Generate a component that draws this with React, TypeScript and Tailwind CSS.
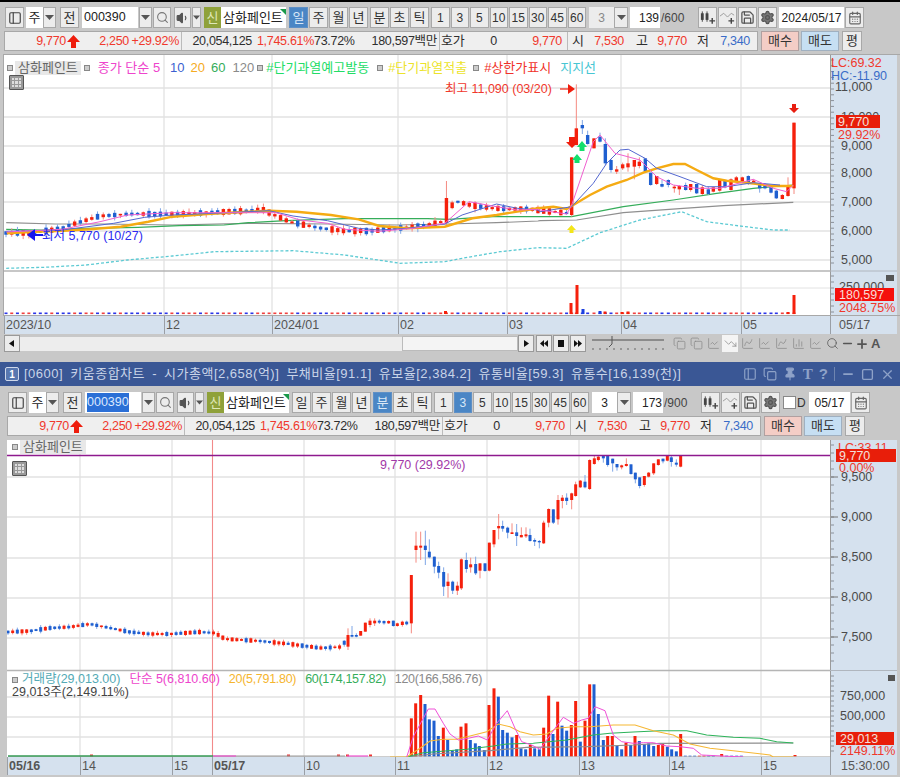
import * as React from "react";
import {
  CalendarDays,
  ChartColumn,
  ChartLine,
  ChartSpline,
  Copy,
  Minus,
  PanelLeft,
  Pin,
  Plus,
  Save,
  Search,
  Settings,
  Square,
  TrendingDown,
  Volume1,
  X,
} from "lucide-react";

const RED = "#f5200c";
const BLUE = "#1f5fd0";
const WICK_RED = "#f58a80";
const WICK_BLUE = "#7fa6e6";

type P = number[];

// reference coords were read off 3x crops, these map them back to page coords
const fromA = (l: P[]) => l.map(([x, y]) => [x / 2.9, 160 + y / 3]);
const fromB = (l: P[]) => l.map(([x, y]) => [540 + x / 3, 70 + y / 3]);
const fromV = (l: P[]) => l.map(([x, y]) => [400 + x / 3, 660 + y / 3]);
const str = (l: P[]) => l.map((p) => `${p[0].toFixed(1)},${p[1].toFixed(1)}`).join(" ");

const rnd = (i: number) => {
  const s = Math.sin(i * 12.9898 + 4.1) * 43758.5453;
  return s - Math.floor(s);
};

const interp = (keys: P[], x: number) => {
  for (let i = 1; i < keys.length; i++) {
    if (x <= keys[i][0]) {
      const t = (x - keys[i - 1][0]) / (keys[i][0] - keys[i - 1][0]);
      return keys[i - 1][1] + (keys[i][1] - keys[i - 1][1]) * t;
    }
  }
  return keys[keys.length - 1][1];
};

type Candle = { x: number; top: number; bot: number; hi: number; lo: number; red: boolean };

function genCandles(keys: P[], from: number, to: number, step: number, size: number): Candle[] {
  const out: Candle[] = [];
  let i = 0;
  for (let x = from; x < to; x += step, i++) {
    const c = interp(keys, x);
    const h = 1.5 + rnd(i) * size;
    out.push({
      x,
      top: c - h / 2,
      bot: c + h / 2,
      hi: c - h / 2 - rnd(i + 50) * size * 0.7,
      lo: c + h / 2 + rnd(i + 90) * size * 0.7,
      red: rnd(i + 200) > 0.42,
    });
  }
  return out;
}

const TOP_KEYS: P[] = [
  [5, 233], [30, 233], [60, 229], [70, 225], [100, 216], [130, 214], [165, 214], [200, 213],
  [245, 211], [262, 209], [272, 214], [290, 222], [320, 228], [345, 231], [370, 231], [400, 228],
  [420, 226], [432, 224], [441, 222], [455, 201], [470, 205], [490, 208], [510, 209], [530, 209],
  [545, 211], [566, 213],
];

// z, bodyTop, bodyBot, wickTop, wickBot, red
const TOP_RAW: [number, number, number, number, number, number][] = [
  [95, 262, 435, 262, 440, 1], [109, 175, 225, 43, 225, 1], [127, 165, 175, 150, 192, 0],
  [143, 195, 222, 182, 224, 0], [162, 205, 235, 205, 235, 1], [180, 200, 215, 188, 217, 0],
  [196, 222, 280, 205, 285, 0], [213, 270, 300, 268, 308, 0], [230, 298, 305, 288, 312, 1],
  [248, 283, 295, 278, 300, 1], [264, 280, 292, 250, 305, 1], [283, 270, 290, 270, 328, 1],
  [298, 275, 288, 262, 295, 1], [316, 265, 305, 265, 308, 0], [332, 308, 345, 308, 347, 0],
  [350, 318, 342, 318, 345, 1], [366, 342, 350, 330, 352, 0], [385, 330, 345, 328, 352, 0],
  [403, 350, 355, 345, 368, 1], [418, 348, 358, 345, 375, 1], [437, 345, 360, 338, 362, 0],
  [452, 342, 360, 342, 365, 1], [470, 342, 370, 342, 372, 0], [487, 352, 372, 345, 375, 1],
  [505, 358, 372, 350, 375, 0], [520, 352, 365, 352, 367, 1], [539, 328, 362, 328, 365, 1],
  [555, 332, 352, 332, 355, 0], [573, 328, 360, 325, 362, 1], [589, 322, 335, 318, 340, 1],
  [607, 322, 335, 320, 340, 1], [625, 318, 342, 316, 345, 0], [641, 332, 338, 328, 342, 1],
  [659, 342, 355, 340, 368, 0], [675, 342, 355, 340, 358, 0], [693, 352, 368, 350, 370, 0],
  [709, 362, 385, 360, 387, 0], [727, 375, 387, 372, 388, 1], [744, 350, 378, 322, 380, 1],
  [762, 158, 355, 158, 372, 1],
];

const TOP_CANDLES: Candle[] = [
  ...genCandles(TOP_KEYS, 6, 567, 5.72, 5).map((c) =>
    Math.abs(c.x - 446) < 3 ? { ...c, top: 198, bot: 223, hi: 181, lo: 225, red: true } : c
  ),
  ...TOP_RAW.map(([z, t, b, h, l, r]) => ({
    x: 540 + z / 3,
    top: 70 + t / 3,
    bot: 70 + b / 3,
    hi: 70 + h / 3,
    lo: 70 + l / 3,
    red: r === 1,
  })),
];

const LOW_KEYS: P[] = [
  [8, 632], [30, 631], [50, 628], [70, 627], [90, 624], [110, 628], [130, 632], [150, 634],
  [170, 634], [200, 632], [215, 633], [225, 639], [260, 641], [290, 644], [320, 648], [340, 647],
  [347, 640],
];

const LOW_RAW: [number, number, number, number, number, number][] = [
  [24, 555, 590, 535, 600, 1], [36, 555, 560, 528, 562, 0], [49, 555, 560, 550, 562, 0], [62, 543, 557, 543, 557, 1],
  [76, 518, 545, 518, 545, 1], [90, 512, 525, 505, 532, 1], [104, 512, 520, 505, 528, 1], [118, 512, 518, 508, 522, 0],
  [132, 513, 520, 511, 524, 0], [146, 513, 520, 511, 522, 1], [160, 512, 528, 512, 530, 0], [172, 520, 528, 518, 530, 1],
  [187, 515, 525, 512, 530, 1], [200, 515, 523, 512, 526, 0], [214, 375, 520, 375, 550, 1], [228, 287, 300, 245, 338, 1],
  [242, 287, 293, 245, 330, 1], [256, 287, 300, 242, 345, 0], [268, 305, 322, 268, 325, 0], [283, 320, 350, 320, 370, 0],
  [296, 348, 368, 335, 385, 0], [311, 366, 410, 352, 438, 0], [324, 395, 408, 370, 443, 1], [338, 395, 422, 392, 432, 0],
  [352, 407, 422, 395, 435, 1], [364, 328, 415, 325, 420, 1], [379, 330, 357, 308, 368, 0], [392, 343, 352, 323, 368, 1],
  [407, 342, 370, 320, 375, 0], [420, 340, 362, 340, 385, 1], [435, 340, 363, 340, 365, 0], [448, 278, 362, 278, 364, 1],
  [462, 240, 283, 240, 292, 1], [476, 228, 235, 192, 268, 1], [488, 228, 236, 212, 245, 0], [503, 233, 248, 230, 265, 0],
  [516, 247, 252, 220, 252, 1], [530, 247, 258, 222, 288, 0], [544, 255, 262, 232, 262, 1], [558, 253, 259, 232, 264, 1],
  [570, 255, 273, 236, 275, 0], [584, 270, 275, 265, 288, 0], [598, 273, 277, 270, 295, 0], [611, 218, 280, 212, 282, 1],
  [626, 177, 218, 175, 232, 1], [640, 178, 218, 178, 222, 0], [654, 150, 208, 135, 224, 1], [667, 143, 153, 135, 175, 1],
  [680, 143, 153, 130, 165, 0], [695, 130, 150, 128, 178, 1], [707, 103, 138, 95, 140, 1], [721, 92, 112, 90, 114, 1],
  [735, 95, 112, 75, 115, 0], [749, 30, 117, 28, 120, 1], [763, 25, 42, 18, 44, 1], [775, 20, 30, 16, 34, 1],
  [790, 18, 25, 15, 38, 0], [803, 18, 45, 15, 50, 0], [818, 26, 40, 26, 65, 0], [831, 42, 52, 42, 62, 0],
  [845, 46, 52, 44, 58, 1], [859, 42, 48, 25, 50, 1], [873, 43, 72, 43, 74, 0], [886, 68, 88, 68, 100, 0],
  [899, 82, 108, 82, 115, 0], [913, 78, 105, 78, 110, 1], [926, 68, 80, 66, 82, 1], [941, 40, 70, 40, 75, 1],
  [955, 28, 45, 28, 47, 1], [969, 26, 34, 26, 40, 0], [982, 18, 32, 16, 34, 1], [994, 22, 36, 15, 50, 0],
  [1009, 38, 44, 28, 50, 0], [1022, 16, 50, 16, 52, 1],
];

const LOW_CANDLES: Candle[] = [
  ...genCandles(LOW_KEYS, 8, 345, 4.67, 3),
  ...LOW_RAW.map(([z, t, b, h, l, r]) => ({
    x: 340 + z / 3,
    top: 450 + t / 3,
    bot: 450 + b / 3,
    hi: 450 + h / 3,
    lo: 450 + l / 3,
    red: r === 1,
  })),
];

// volume bars of the lower chart: z, top, red
const VOL_BARS: [number, number, number][] = [
  [34, 175, 1], [47, 130, 1], [62, 105, 1], [75, 132, 0], [88, 178, 0], [102, 182, 0], [115, 228, 0], [130, 203, 1],
  [143, 240, 0], [157, 272, 0], [170, 268, 0], [183, 200, 1], [198, 190, 1], [211, 240, 0], [226, 250, 0], [238, 258, 0],
  [253, 270, 0], [267, 135, 1], [282, 85, 1], [295, 110, 0], [308, 210, 0], [322, 218, 0], [336, 232, 0], [350, 225, 1],
  [363, 265, 0], [377, 268, 0], [391, 255, 1], [404, 265, 0], [418, 268, 0], [431, 203, 1], [446, 107, 1], [459, 222, 0],
  [473, 125, 1], [486, 197, 0], [500, 212, 0], [514, 195, 1], [527, 123, 1], [541, 245, 0], [555, 182, 1], [569, 73, 1],
  [582, 73, 0], [595, 162, 0], [610, 240, 0], [623, 228, 1], [637, 228, 1], [651, 258, 0], [665, 268, 0], [678, 248, 1],
  [692, 255, 0], [705, 228, 1], [718, 243, 0], [733, 252, 0], [746, 250, 0], [761, 258, 0], [775, 255, 1], [788, 252, 1],
  [802, 260, 0], [815, 268, 0], [829, 274, 0], [842, 222, 1], [856, 287, 0], [870, 287, 0], [884, 287, 0], [898, 287, 1],
  [912, 287, 1], [926, 287, 0], [940, 287, 0], [965, 282, 1], [980, 287, 0], [995, 287, 0], [1010, 287, 0], [1024, 287, 0],
  [1185, 285, 1],
];

const TOP_ORANGE = str([
  ...fromA([[20, 220], [100, 215], [185, 212], [260, 208], [350, 200], [430, 185], [500, 170], [600, 162], [720, 155], [780, 152], [860, 155], [960, 165], [1040, 178], [1100, 198], [1180, 205], [1290, 200], [1370, 175], [1440, 165], [1560, 145]]),
  ...fromB([[40, 410], [80, 417], [100, 405], [150, 375], [200, 350], [260, 330], [310, 308], [350, 295], [400, 282], [435, 282], [470, 300], [520, 325], [560, 332], [620, 338], [700, 348], [760, 348]]),
]);
const TOP_GREEN = str([
  ...fromA([[18, 208], [120, 210], [250, 205], [400, 202], [520, 197], [650, 195], [720, 188], [830, 182], [1000, 176], [1240, 176], [1300, 178], [1430, 170], [1560, 170]]),
  ...fromB([[95, 440], [250, 410], [400, 390], [530, 370], [640, 355], [760, 345]]),
]);
const TOP_GRAY = str([
  ...fromA([[18, 188], [160, 192], [300, 192], [500, 195], [720, 190], [950, 192], [1150, 195], [1300, 192], [1440, 188], [1560, 183]]),
  ...fromB([[0, 452], [110, 450], [250, 428], [430, 415], [550, 407], [760, 397]]),
]);
const TOP_BLUE = str([
  ...fromA([[18, 214], [180, 210], [330, 190], [420, 172], [500, 165], [620, 160], [780, 152], [850, 168], [950, 182], [1040, 205], [1100, 210], [1180, 205], [1290, 192], [1340, 165], [1440, 132], [1500, 145], [1560, 150]]),
  ...fromB([[0, 425], [95, 410], [160, 340], [200, 280], [240, 240], [265, 238], [315, 265], [350, 295], [420, 320], [500, 350], [560, 350], [640, 338], [720, 345]]),
]);
const TOP_PINK = str([
  ...fromA([[18, 216], [180, 208], [290, 185], [370, 165], [500, 158], [720, 158], [800, 158], [870, 180], [950, 190], [1000, 208], [1100, 214], [1200, 205], [1290, 190], [1360, 125], [1440, 140], [1500, 150], [1560, 148]]),
  ...fromB([[0, 420], [80, 432], [95, 405], [160, 215], [180, 195], [225, 250], [300, 270], [350, 320], [400, 345], [470, 355], [540, 355], [640, 328], [700, 355], [740, 365], [760, 345]]),
]);
const TOP_TEAL = str([
  ...fromA([[18, 325], [130, 322], [250, 315], [370, 300], [500, 288], [620, 275], [850, 272], [1000, 285], [1160, 310], [1290, 305], [1340, 295], [1450, 275], [1560, 263]]),
  ...fromB([[80, 535], [180, 488], [300, 450], [425, 425], [500, 455], [600, 468], [700, 480], [750, 480]]),
]);

const V_PINK = str(fromV([[20, 291], [40, 230], [70, 175], [85, 147], [105, 147], [130, 190], [150, 222], [175, 240], [205, 235], [235, 228], [262, 240], [290, 190], [322, 152], [345, 205], [365, 245], [395, 255], [420, 268], [440, 240], [465, 205], [490, 172], [520, 190], [545, 180], [565, 175], [585, 140], [615, 152], [640, 225], [665, 245], [700, 250], [730, 248], [760, 248], [800, 258], [840, 260], [880, 265], [905, 285], [1030, 291]]));
const V_ORANGE = str(fromV([[-30, 291], [20, 291], [60, 265], [90, 243], [130, 238], [170, 238], [210, 228], [260, 215], [295, 192], [330, 200], [360, 215], [400, 225], [440, 222], [470, 205], [520, 200], [570, 200], [640, 195], [705, 195], [760, 212], [820, 225], [870, 252], [930, 265], [1000, 272], [1110, 285], [1120, 291], [1180, 291]]));
const V_GREEN = str(fromV([[20, 291], [70, 278], [200, 268], [280, 258], [320, 252], [400, 250], [500, 240], [580, 225], [630, 220], [700, 216], [780, 212], [860, 212], [920, 225], [1000, 232], [1080, 235], [1130, 245], [1180, 249]]));
const V_GRAY = str(fromV([[20, 291], [100, 282], [270, 272], [380, 262], [560, 260], [700, 255], [780, 250], [1180, 249]]));

function Candles({ data, width }: { data: Candle[]; width: number }) {
  return (
    <g>
      {data.map((c, i) => (
        <g key={i}>
          <line x1={c.x} x2={c.x} y1={c.hi} y2={c.lo} stroke={c.red ? WICK_RED : WICK_BLUE} strokeWidth="1" />
          <rect x={c.x - width / 2} y={c.top} width={width} height={c.bot - c.top} fill={c.red ? RED : BLUE} />
        </g>
      ))}
    </g>
  );
}

function Caret() {
  return (
    <svg width="9" height="5" viewBox="0 0 9 5" aria-hidden="true">
      <polygon points="0,0 9,0 4.5,5" fill="#555" />
    </svg>
  );
}

function CandleIcon() {
  return (
    <svg width="18" height="16" viewBox="0 0 18 16" aria-hidden="true">
      <rect x="2" y="3" width="3" height="7" fill="#444" />
      <rect x="7" y="3" width="3" height="7" fill="#444" />
      <path d="M3.5 1v11M8.5 1v11" stroke="#444" />
      <path d="M14 8v6M11 11h6" stroke="#444" strokeWidth="1.5" />
    </svg>
  );
}

function LineAddIcon() {
  return (
    <svg width="18" height="16" viewBox="0 0 18 16" fill="none" aria-hidden="true">
      <path d="M1 6l4-3 4 4 4-4 3 2" stroke="#999" />
      <path d="M13 8v6M10 11h6" stroke="#444" strokeWidth="1.5" />
    </svg>
  );
}

const BTN =
  "flex h-[21px] shrink-0 items-center justify-center border border-[#a8a8a8] bg-[#ececec] text-[#333]";
const ACTIVE =
  "flex h-[21px] shrink-0 items-center justify-center border border-[#5f90c6] bg-[#4a86c5] text-[#d9e8f7]";

function Toolbar({ lower }: { lower?: boolean }) {
  const minutes = ["1", "3", "5", "10", "15", "30", "45", "60"];
  return (
    <div className={`flex h-[21px] items-center text-[13px] ${lower ? "ml-[8px] mt-[6px]" : "ml-[5px] mt-[5px]"}`}>
      <div className={`${BTN} w-[19px]`}>
        <PanelLeft size={14} color="#444" />
      </div>
      <div className="ml-[2px] flex h-[21px] w-[17px] items-center justify-center bg-white text-[#222]">주</div>
      <div className={`${BTN} w-[13px]`}>
        <Caret />
      </div>
      <div className={`${BTN} ml-[4px] w-[19px]`}>전</div>
      <div className="ml-[3px] flex h-[21px] w-[56px] items-center bg-white pl-[2px] text-[12.5px] text-[#222]">
        {lower ? <span className="bg-[#2b6fd6] text-[#dbe8ff]">000390</span> : "000390"}
      </div>
      <div className={`${BTN} ml-[1px] w-[13px]`}>
        <Caret />
      </div>
      <div className={`${BTN} ml-[1px] w-[18px]`}>
        <Search size={13} color="#777" />
      </div>
      <div className={`${BTN} ml-[3px] w-[17px]`}>
        <Volume1 size={14} color="#555" fill="#555" />
      </div>
      <div className={`${BTN} ml-[1px] w-[9px]`}>
        <Caret />
      </div>
      <div className="ml-[3px] flex h-[21px] w-[17px] items-center justify-center bg-[#8fa13a] text-[#dfe8b8]">신</div>
      <div className="relative flex h-[21px] w-[65px] items-center overflow-hidden bg-white pl-[2px] text-[#222]">
        <span className="whitespace-nowrap">삼화페인트</span>
        <span className="absolute right-0 top-[2px] h-0 w-0 border-l-[6px] border-t-[6px] border-l-transparent border-t-[#1a9a4a]" />
      </div>
      <div className="ml-[3px] flex gap-[1px]">
        {["일", "주", "월", "년"].map((t, i) => (
          <div key={t} className={`${!lower && i === 0 ? ACTIVE : BTN} w-[19px]`}>
            {t}
          </div>
        ))}
      </div>
      <div className="ml-[2px] flex gap-[1px]">
        {["분", "초", "틱"].map((t, i) => (
          <div key={t} className={`${lower && i === 0 ? ACTIVE : BTN} w-[19px]`}>
            {t}
          </div>
        ))}
      </div>
      <div className="ml-[2px] flex gap-[1px] text-[12px]">
        {minutes.map((t) => (
          <div
            key={t}
            className={`${lower && t === "3" ? ACTIVE : BTN} w-[18.5px] ${lower ? "" : "text-[#9a9a9a]"}`}
          >
            {t}
          </div>
        ))}
      </div>
      <div className={`${lower ? "bg-white text-[#222]" : "bg-[#ececec] text-[#888]"} ml-[3px] flex h-[21px] w-[25px] items-center justify-center text-[12px]`}>
        3
      </div>
      <div className={`${BTN} w-[14px]`}>
        <Caret />
      </div>
      <div className="ml-[2px] flex h-[21px] w-[30px] items-center justify-end bg-white pr-[1px] text-[12px] text-[#222]">
        {lower ? "173" : "139"}
      </div>
      <div className="ml-[1px] w-[26px] text-[12px] text-[#444]">{lower ? "/900" : "/600"}</div>
      <div className="ml-[11px] flex gap-[1px]">
        <div className={`${BTN} w-[19px]`}>
          <CandleIcon />
        </div>
        <div className={`${BTN} w-[19px]`}>
          <LineAddIcon />
        </div>
        <div className={`${BTN} w-[19px]`}>
          <Save size={15} color="#555" />
        </div>
        <div className={`${BTN} w-[19px]`}>
          <Settings size={15} color="#555" fill="#777" />
        </div>
      </div>
      {lower && (
        <div className="ml-[3px] flex items-center">
          <span className="h-[13px] w-[13px] border border-[#888] bg-white" />
          <span className="ml-[1px] w-[10px] text-[12px] text-[#333]">D</span>
        </div>
      )}
      <div
        className={`${lower ? "ml-[2px] w-[41px]" : "ml-[2px] w-[65px]"} flex h-[21px] items-center justify-center overflow-hidden whitespace-nowrap bg-white text-[12px] text-[#222]`}
      >
        {lower ? "05/17" : "2024/05/17"}
      </div>
      <div className={`${BTN} ml-[1px] w-[19px]`}>
        <CalendarDays size={14} color="#666" />
      </div>
    </div>
  );
}

const TXT_RED = "text-[#f0382c]";
const TXT_DARK = "text-[#2e2e2e]";
const TXT_BLUE = "text-[#3a6cc8]";

function InfoRow({ lower }: { lower?: boolean }) {
  return (
    <div className={`mt-[3px] flex h-[20px] items-center text-[12.5px] ${lower ? "ml-[7px]" : "ml-[4px]"}`}>
      <div className="flex h-[20px] w-[754px] items-center whitespace-nowrap border border-[#a8a8a8] bg-[#efefef] tracking-[-0.3px]">
        <span className={`flex w-[75px] items-center justify-end ${TXT_RED}`}>
          9,770
          <svg width="13" height="13" viewBox="0 0 13 13" className="ml-[1px]" aria-hidden="true">
            <polygon points="6.5,0 13,7 9,7 9,13 4,13 4,7 0,7" fill="#ee1c0c" />
          </svg>
        </span>
        <span className={`w-[49px] text-right ${TXT_RED}`}>2,250</span>
        <span className={`w-[50px] text-right ${TXT_RED}`}>+29.92%</span>
        <span className="ml-[2px] h-[18px] w-px bg-[#bbb]" />
        <span className={`w-[70px] text-right ${TXT_DARK}`}>20,054,125</span>
        <span className={`w-[62px] text-right ${TXT_RED}`}>1,745.61%</span>
        <span className={`w-[40px] text-right ${TXT_DARK}`}>73.72%</span>
        <span className={`w-[83px] text-right ${TXT_DARK}`}>180,597백만</span>
        <span className="ml-[2px] h-[18px] w-px bg-[#bbb]" />
        <span className={`ml-[1px] w-[24px] text-[13px] ${TXT_DARK}`}>호가</span>
        <span className={`w-[32px] text-right ${TXT_DARK}`}>0</span>
        <span className={`w-[65px] text-right ${TXT_RED}`}>9,770</span>
        <span className="ml-[5px] h-[18px] w-px bg-[#bbb]" />
        <span className={`ml-[4px] w-[12px] text-[13px] ${TXT_DARK}`}>시</span>
        <span className={`w-[40px] text-right ${TXT_RED}`}>7,530</span>
        <span className={`ml-[12px] w-[12px] text-[13px] ${TXT_DARK}`}>고</span>
        <span className={`w-[39px] text-right ${TXT_RED}`}>9,770</span>
        <span className={`ml-[10px] w-[12px] text-[13px] ${TXT_DARK}`}>저</span>
        <span className={`w-[41px] text-right ${TXT_BLUE}`}>7,340</span>
      </div>
      <div className="ml-[3px] flex h-[20px] w-[38px] items-center justify-center border border-[#b0a0a0] bg-[#f4cdc6] text-[13px] text-[#333]">
        매수
      </div>
      <div className="ml-[2px] flex h-[20px] w-[38px] items-center justify-center border border-[#a0b0c0] bg-[#c6dff3] text-[13px] text-[#333]">
        매도
      </div>
      <div className={`ml-[3px] w-[20px] ${BTN} !h-[20px] text-[13px]`}>평</div>
    </div>
  );
}

function Bullet({ className }: { className?: string }) {
  return <span className={`h-[6px] w-[6px] shrink-0 border border-[#888] bg-[#ccc] ${className ?? ""}`} />;
}

function GridBadge() {
  return (
    <div className="flex h-[15px] w-[15px] items-center justify-center rounded-[1px] border border-[#555] bg-[#999]">
      <div className="grid h-[9px] w-[9px] grid-cols-3 gap-px bg-[#999]">
        {Array.from({ length: 9 }, (_, i) => (
          <span key={i} className="bg-[#ddd]" />
        ))}
      </div>
    </div>
  );
}

const HGRID = "#e2e2e2";
const VGRID = "#d9d9d9";

function TopPlot() {
  const vx = [164, 272, 398, 507, 621, 741];
  const hy = [88, 117, 146, 173, 202, 231, 260];
  const volBars: [number, number, boolean][] = [
    [445.5, 311, true], [571, 303, true], [577, 285, true], [583, 309, false], [600, 311, false], [605, 311.5, true], [622, 312, true], [628, 311.5, true], [788, 312, true], [794, 295, true],
  ];
  return (
    <div className="relative h-[260px] w-[826px] bg-white">
      <svg viewBox="4 55 826 260" className="absolute inset-0 h-[260px] w-[826px]" aria-hidden="true">
        {vx.map((x) => (
          <line key={x} x1={x} x2={x} y1="55" y2="315" stroke={VGRID} />
        ))}
        {hy.map((y) => (
          <line key={y} x1="4" x2="830" y1={y} y2={y} stroke={HGRID} strokeWidth="1.4" />
        ))}
        <line x1="4" x2="830" y1="271" y2="271" stroke="#b5b5b5" strokeWidth="1.4" />
        <line x1="4" x2="830" y1="288" y2="288" stroke={HGRID} />
        <polyline points={TOP_TEAL} fill="none" stroke="#5ccad3" strokeWidth="1.3" strokeDasharray="3 2" />
        <polyline points={TOP_GRAY} fill="none" stroke="#8f8f8f" strokeWidth="1.2" />
        <polyline points={TOP_GREEN} fill="none" stroke="#35ad5a" strokeWidth="1.2" />
        <Candles data={TOP_CANDLES} width={3.4} />
        <polyline points={TOP_ORANGE} fill="none" stroke="#f5ab13" strokeWidth="2.4" />
        <polyline points={TOP_BLUE} fill="none" stroke="#5468d0" strokeWidth="1" />
        <polyline points={TOP_PINK} fill="none" stroke="#f060d0" strokeWidth="1" />
        {/* markers */}
        <polygon points="572,148 566,142 569,142 569,137 575,137 575,142 578,142" fill="#f01d0c" />
        <polygon points="794,113 789,108 792,108 792,104 796,104 796,108 799,108" fill="#e81d10" />
        <polygon points="582,141 587,147 584.5,147 584.5,151 579.5,151 579.5,147 577,147" fill="#13e06c" />
        <polygon points="577,154 582,160 579.5,160 579.5,163 574.5,163 574.5,160 572,160" fill="#13e06c" />
        <polygon points="571.5,225 576,230 573.5,230 573.5,233 569.5,233 569.5,230 567,230" fill="#f3e51a" />
        <path d="M560 89h10" stroke="#f01d0c" strokeWidth="1.2" />
        <polygon points="575,89 568,84 568,94" fill="#f01d0c" />
        <path d="M43 235H30" stroke="#1515ee" strokeWidth="2" />
        <polygon points="27,235 35,229 35,241" fill="#1515ee" />
        <text x="445" y="93" fontSize="12.5" fill="#f0382c">최고 11,090 (03/20)</text>
        <text x="42" y="240" fontSize="12.5" fill="#2a2af0">최저 5,770 (10/27)</text>
        {/* volume baseline */}
        {TOP_CANDLES.map((c, i) => (
          <rect key={i} x={c.x - 1.5} y="312.5" width="3" height="1.6" fill={c.red ? "#f04040" : "#2a35e8"} />
        ))}
        {volBars.map(([x, y, red]) => (
          <rect key={x} x={x - 1.5} y={y} width="3" height={314 - y} fill={red ? RED : "#1a3fe0"} />
        ))}
      </svg>
      <div className="absolute left-[3px] top-[3px] flex items-center whitespace-nowrap text-[13px]">
        <Bullet />
        <span className="ml-[2px] flex h-[14px] items-center bg-[#e8e8e8] px-[3px] text-[#666]">삼화페인트</span>
        <Bullet className="ml-[3px]" />
        <span className="ml-[8px] text-[#ee44cc]">종가 단순 5</span>
        <span className="ml-[10px] text-[#3b5fd0]">10</span>
        <span className="ml-[6px] text-[#f5ab22]">20</span>
        <span className="ml-[6px] text-[#35ad5a]">60</span>
        <span className="ml-[7px] text-[#8a8a8a]">120</span>
        <Bullet className="ml-[3px]" />
        <span className="ml-[3px] text-[#22dd66]">#단기과열예고발동</span>
        <Bullet className="ml-[8px]" />
        <span className="ml-[5px] text-[#ece32a]">#단기과열적출</span>
        <Bullet className="ml-[6px]" />
        <span className="ml-[5px] text-[#f0322a]">#상한가표시</span>
        <span className="ml-[9px] text-[#47c6d3]">지지선</span>
      </div>
      <div className="absolute left-[5px] top-[20px]">
        <GridBadge />
      </div>
    </div>
  );
}

function Ticks({ from, to, step }: { from: number; to: number; step: number }) {
  const out: number[] = [];
  for (let y = from; y < to; y += step) out.push(y);
  return (
    <g>
      {out.map((y) => (
        <line key={y} x1="831" x2="834" y1={y} y2={y} stroke="#8a9099" />
      ))}
    </g>
  );
}

function TopAxis() {
  const labels: [number, string][] = [
    [91, "11,000"], [150, "9,000"], [177, "8,000"], [206, "7,000"], [235, "6,000"], [264, "5,000"], [291, "250,000"],
  ];
  return (
    <svg viewBox="830 55 67 260" className="h-[260px] w-[67px] bg-[#d5e1ee]" aria-hidden="true">
      <line x1="830.5" x2="830.5" y1="55" y2="315" stroke="#9a9a9a" />
      <line x1="830" x2="897" y1="271" y2="271" stroke="#b0b6be" />
      <Ticks from={60} to={268} step={5.8} />
      <Ticks from={276} to={314} step={6} />
      <text x="831" y="67" fontSize="12.5" fill="#f0382c">LC:69.32</text>
      <text x="831" y="80" fontSize="12.5" fill="#3a6cc8">HC:-11.90</text>
      {labels.map(([y, t]) => (
        <text key={t} x={t.length > 5 ? (t.length > 6 ? 839 : 835) : 841} y={y} fontSize="12.5" fill="#4a4a4a">
          {t}
        </text>
      ))}
      <text x="841" y="121" fontSize="12.5" fill="#4a4a4a">10,000</text>
      <rect x="836" y="115" width="44" height="13" fill="#e81e0a" />
      <text x="838" y="126" fontSize="12.5" fill="#f4e0dc">9,770</text>
      <text x="838" y="139" fontSize="12.5" fill="#f0382c">29.92%</text>
      <rect x="835" y="288" width="59" height="13" fill="#f5100c" />
      <text x="839" y="299" fontSize="12.5" fill="#f8dcd8">180,597</text>
      <text x="839" y="312" fontSize="12.5" fill="#f0382c">2048.75%</text>
      <rect x="886" y="275" width="8" height="6" fill="#555" />
    </svg>
  );
}

function LowerPlot() {
  const vx = [80, 172, 304, 395, 487, 579, 669, 761];
  const hy = [477, 517, 558, 598, 638, 697, 717, 737];
  return (
    <div className="relative h-[317px] w-[823px] bg-white">
      <svg viewBox="7 440 823 317" className="absolute inset-0 h-[317px] w-[823px]" aria-hidden="true">
        {vx.map((x) => (
          <line key={x} x1={x} x2={x} y1="440" y2="757" stroke={VGRID} />
        ))}
        {hy.map((y) => (
          <line key={y} x1="7" x2="830" y1={y} y2={y} stroke={HGRID} strokeWidth="1.4" />
        ))}
        <line x1="7" x2="830" y1="670.5" y2="670.5" stroke="#b5b5b5" strokeWidth="1.4" />
        <line x1="212.5" x2="212.5" y1="440" y2="757" stroke="#f28a8a" strokeWidth="1.1" />
        <Candles data={LOW_CANDLES} width={3} />
        <line x1="7" x2="830" y1="455.5" y2="455.5" stroke="#8e1a8e" strokeWidth="1.6" />
        <text x="380" y="469" fontSize="12.5" fill="#a238a8">9,770 (29.92%)</text>
        {/* volume */}
        {VOL_BARS.map(([z, v, r]) => (
          <rect key={z} x={400 + z / 3 - 1.5} y={660 + v / 3} width="3" height={757 - (660 + v / 3)} fill={r ? RED : BLUE} />
        ))}
        {[91, 288, 338, 347, 370].map((x) => (
          <rect key={x} x={x - 1} y="754.5" width="3" height="2.5" fill="#e33" />
        ))}
        <line x1="8" x2="830" y1="757" y2="757" stroke="#bdbdbd" strokeWidth="1.5" />
        <line x1="8" x2="213" y1="756" y2="756" stroke="#359a55" strokeWidth="1.4" />
        <line x1="213" x2="345" y1="756" y2="756" stroke="#999" strokeWidth="1.2" />
        <line x1="213" x2="236" y1="756" y2="756" stroke="#f050d0" strokeWidth="1.2" />
        <line x1="347" x2="368" y1="756" y2="756" stroke="#f050d0" strokeWidth="1.2" />
        <polyline points={V_GRAY} fill="none" stroke="#8f8f8f" strokeWidth="1.2" />
        <polyline points={V_GREEN} fill="none" stroke="#2eb35a" strokeWidth="1.1" />
        <polyline points={V_ORANGE} fill="none" stroke="#f6b733" strokeWidth="1.1" />
        <polyline points={V_PINK} fill="none" stroke="#f050d8" strokeWidth="1" />
      </svg>
      <div className="absolute left-[5px] top-[0px] flex items-center whitespace-nowrap text-[13px]">
        <Bullet />
        <span className="ml-[2px] flex h-[14px] items-center bg-[#e8e8e8] px-[3px] text-[#666]">삼화페인트</span>
      </div>
      <div className="absolute left-[5px] top-[21px]">
        <GridBadge />
      </div>
      <div className="absolute left-[5px] top-[233px] whitespace-nowrap text-[12.5px] leading-[13px]">
        <div className="flex items-center">
          <Bullet />
          <span className="ml-[4px] text-[#54aab5]">거래량(29,013.00)</span>
          <span className="ml-[9px] text-[#ee44cc]">단순 5(6,810.60)</span>
          <span className="ml-[9px] tracking-[-0.3px] text-[#f5b52e]">20(5,791.80)</span>
          <span className="ml-[9px] tracking-[-0.3px] text-[#35ad5a]">60(174,157.82)</span>
          <span className="ml-[9px] tracking-[-0.3px] text-[#8a8a8a]">120(166,586.76)</span>
        </div>
        <div className="text-[#444]">29,013주(2,149.11%)</div>
      </div>
    </div>
  );
}

function LowerAxis() {
  const labels: [number, string][] = [[481, "9,500"], [521, "9,000"], [561, "8,500"], [601, "8,000"], [641, "7,500"]];
  return (
    <svg viewBox="830 440 67 317" className="h-[317px] w-[67px] bg-[#d5e1ee]" aria-hidden="true">
      <line x1="830.5" x2="830.5" y1="440" y2="757" stroke="#9a9a9a" />
      <line x1="830" x2="897" y1="670.5" y2="670.5" stroke="#b0b6be" />
      <Ticks from={445} to={668} step={8} />
      <Ticks from={676} to={756} step={5} />
      <text x="838" y="452" fontSize="12.5" fill="#f0382c">LC:33.11</text>
      <rect x="836" y="449" width="60" height="13" fill="#e81e0a" />
      <text x="839" y="460" fontSize="12.5" fill="#f4e0dc">9,770</text>
      <text x="839" y="472" fontSize="12.5" fill="#f0382c">0.00%</text>
      {labels.map(([y, t]) => (
        <g key={t}>
          <line x1="831" x2="838" y1={y - 4} y2={y - 4} stroke="#777" />
          <text x="841" y={y} fontSize="12.5" fill="#4a4a4a">{t}</text>
        </g>
      ))}
      <text x="840" y="700" fontSize="12.5" fill="#4a4a4a">750,000</text>
      <text x="840" y="720" fontSize="12.5" fill="#4a4a4a">500,000</text>
      <rect x="836" y="732" width="58" height="13" fill="#e81e0a" />
      <text x="840" y="743" fontSize="12.5" fill="#f4e0dc">29,013</text>
      <text x="840" y="755" fontSize="12.5" fill="#f0382c">2149.11%</text>
      <rect x="888" y="675" width="7" height="6" fill="#555" />
    </svg>
  );
}

const AXIS_CELL = "flex h-[18px] items-center border-l border-[#9a9fa6] pl-[1px] text-[12.5px] text-[#555] whitespace-nowrap";

function TopDates() {
  return (
    <div className="ml-[4px] mt-px flex h-[18px] w-[893px] bg-[#d5e1ee]">
      <div className={`${AXIS_CELL} w-[160px]`}>2023/10</div>
      <div className={`${AXIS_CELL} w-[108px]`}>12</div>
      <div className={`${AXIS_CELL} w-[126px]`}>2024/01</div>
      <div className={`${AXIS_CELL} w-[109px]`}>02</div>
      <div className={`${AXIS_CELL} w-[114px]`}>03</div>
      <div className={`${AXIS_CELL} w-[120px]`}>04</div>
      <div className={`${AXIS_CELL} w-[89px]`}>05</div>
      <div className={`${AXIS_CELL} w-[67px] pl-[8px]`}>05/17</div>
    </div>
  );
}

function LowerDates() {
  return (
    <div className="ml-[7px] flex h-[18px] w-[890px] bg-[#d5e1ee]">
      <div className={`${AXIS_CELL} w-[73px] font-bold text-[#444]`}>05/16</div>
      <div className={`${AXIS_CELL} w-[92px]`}>14</div>
      <div className={`${AXIS_CELL} w-[40px]`}>15</div>
      <div className={`${AXIS_CELL} w-[92px] font-bold text-[#444]`}>05/17</div>
      <div className={`${AXIS_CELL} w-[91px]`}>10</div>
      <div className={`${AXIS_CELL} w-[92px]`}>11</div>
      <div className={`${AXIS_CELL} w-[92px]`}>12</div>
      <div className={`${AXIS_CELL} w-[90px]`}>13</div>
      <div className={`${AXIS_CELL} w-[92px]`}>14</div>
      <div className={`${AXIS_CELL} w-[69px]`}>15</div>
      <div className={`${AXIS_CELL} w-[67px] pl-[10px]`}>15:30:00</div>
    </div>
  );
}

function NavBtn({ pts }: { pts: string[] }) {
  return (
    <div className="flex h-[17px] w-[16px] items-center justify-center border border-[#999] bg-[#ececec]">
      <svg width="10" height="9" viewBox="0 0 10 9" aria-hidden="true">
        {pts.map((p) => (
          <polygon key={p} points={p} fill="#111" />
        ))}
      </svg>
    </div>
  );
}

function ScrollStrip() {
  const tools = [Copy, Copy, ChartLine, TrendingDown, ChartSpline, ChartLine, ChartSpline, ChartColumn, ChartLine, Search];
  return (
    <div className="ml-[4px] mt-px flex h-[17px] items-center">
      <NavBtn pts={["2,4.5 7,1 7,8"]} />
      <div className="h-[14px] w-[382px] bg-[#ededed]" />
      <div className="h-[15px] w-[116px] border border-[#bbb] bg-[#f4f4f4]" />
      <NavBtn pts={["3,1 8,4.5 3,8"]} />
      <div className="w-[2px]" />
      <NavBtn pts={["5,1 1,4.5 5,8", "9,1 5,4.5 9,8"]} />
      <div className="w-[1px]" />
      <NavBtn pts={["2,1 8,1 8,8 2,8"]} />
      <div className="w-[1px]" />
      <NavBtn pts={["1,1 5,4.5 1,8", "5,1 9,4.5 5,8"]} />
      {/* zoom slider */}
      <svg width="74" height="17" viewBox="0 0 74 17" className="ml-[5px]" aria-hidden="true">
        <path d="M1 5h72" stroke="#777" strokeWidth="1.5" />
        <path d="M21 1v8l-3 3" stroke="#555" fill="none" />
        <path d="M2 13v2M9 13v2M16 13v2M23 13v2M30 13v2M37 13v2M44 13v2M51 13v2M58 13v2M65 13v2M72 13v2" stroke="#666" />
      </svg>
      <div className="ml-[6px] flex items-center gap-[1px]">
        {tools.map((Icon, i) => (
          <span key={i} className={`flex h-[17px] w-[16px] items-center justify-center ${i === 3 ? "bg-[#f4f4f4]" : ""}`}>
            <Icon size={13} color={i === 9 ? "#555" : "#8a8a8a"} strokeWidth={1.4} />
          </span>
        ))}
        <Minus size={13} color="#555" strokeWidth={3} />
        <Plus size={14} color="#555" strokeWidth={3} />
        <span className="ml-[1px] text-[13px] font-bold text-[#555]">A</span>
      </div>
    </div>
  );
}

function TitleBar() {
  return (
    <div className="mt-[10px] flex h-[24px] items-center bg-[#3a5795] pl-[5px] text-[13px] text-[#c9d4e8]">
      <span className="flex h-[14px] w-[14px] items-center justify-center rounded-[2px] border border-[#cfd8ea] bg-[#5877b0] text-[10px] font-bold text-white">
        1
      </span>
      <span className="ml-[5px] whitespace-nowrap tracking-[0.5px] [word-spacing:3px]">
        [0600] 키움종합차트 - 시가총액[2,658(억)] 부채비율[91.1] 유보율[2,384.2] 유통비율[59.3] 유통수[16,139(천)]
      </span>
      <div className="ml-auto mr-[5px] flex items-center gap-[6px] text-[#8ea2c8]">
        <PanelLeft size={14} />
        <Copy size={14} />
        <Pin size={14} fill="#8ea2c8" />
        <span className="font-['Liberation_Serif',serif] text-[15px] font-bold">T</span>
        <span className="text-[15px] font-bold">?</span>
        <span className="h-[14px] w-px bg-[#6f85b0]" />
        <Minus size={14} strokeWidth={3} />
        <Square size={13} strokeWidth={2.5} />
        <X size={15} />
      </div>
    </div>
  );
}

export default function App() {
  return (
    <div className="flex h-[777px] w-[900px] flex-col overflow-hidden bg-[#c8c8c8] font-['Liberation_Sans','Noto_Sans_CJK_KR',sans-serif]">
      <div className="h-[2px] bg-black" />
      <Toolbar />
      <InfoRow />
      <div className="ml-[4px] mt-[4px] flex ring-1 ring-[#a8a8a8]">
        <TopPlot />
        <TopAxis />
      </div>
      <TopDates />
      <ScrollStrip />
      <TitleBar />
      <Toolbar lower />
      <InfoRow lower />
      <div className="ml-[7px] mt-[4px] flex">
        <LowerPlot />
        <LowerAxis />
      </div>
      <LowerDates />
    </div>
  );
}
